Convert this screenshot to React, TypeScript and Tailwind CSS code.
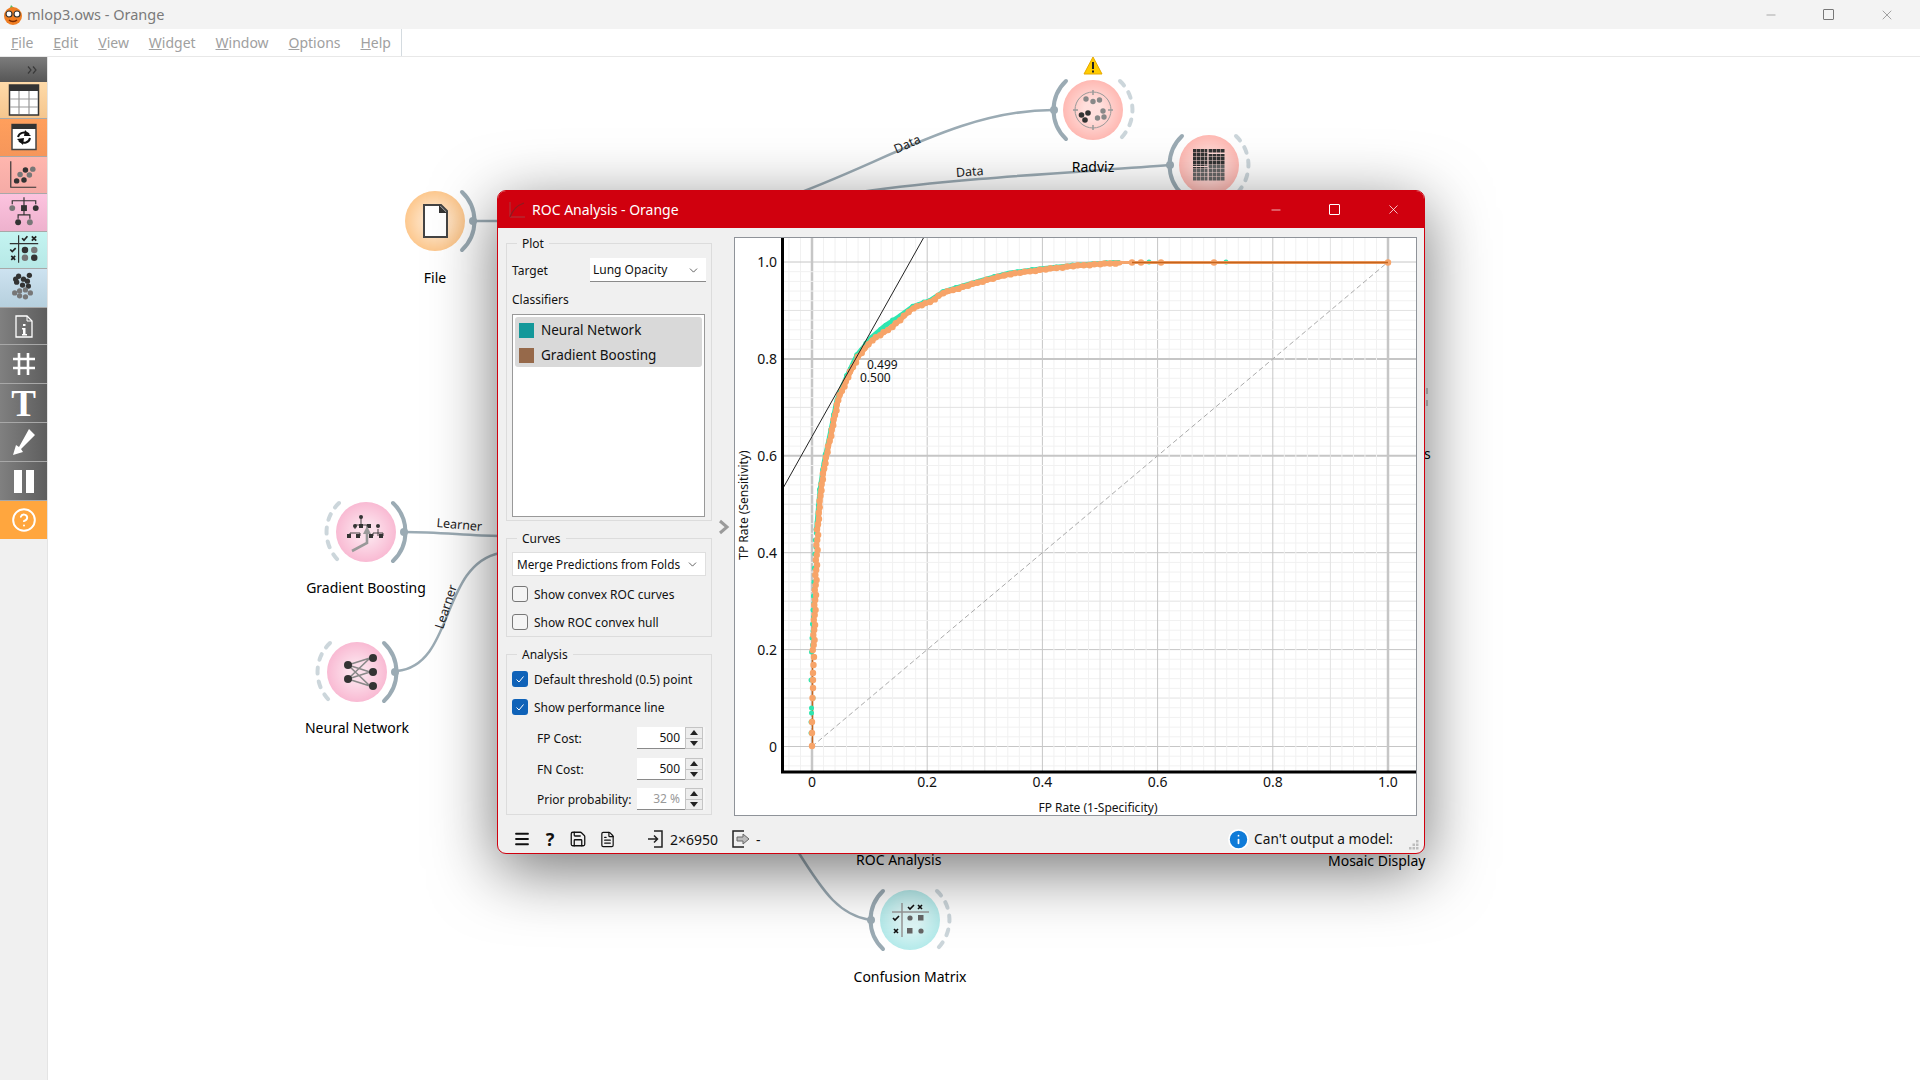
import { ChevronDown, Menu, Save, FileText, Info, CircleHelp, Minus, X } from "lucide-react";
import { ReactNode } from "react";

// plot scale, in screen coordinates
const px = (v: number) => 812 + 576 * v;
const py = (v: number) => 746.5 - 484.5 * v;

const orangeCurve = [[817.5, 530], [821, 490], [825, 463], [832, 430], [838, 400], [848, 377], [858, 357], [872, 340], [888, 330], [900, 320], [913, 308], [930, 302], [943, 293], [963, 287], [987, 280], [1010, 274], [1040, 270], [1073, 266], [1100, 264], [1120, 263]];
const tealCurve = [[816.5, 530], [820, 490], [824, 463], [831, 430], [837, 400], [847, 376], [857, 355], [871, 338], [886, 325], [900, 316], [913, 306.5], [930, 300.5], [943, 292], [963, 286], [987, 279], [1010, 273], [1040, 269], [1073, 265.5], [1100, 263.5], [1120, 262.5]];

// dots along a curve, slightly scattered like real threshold points
function sample(points: number[][], step: number) {
  const out: number[][] = [];
  for (let i = 0; i < points.length - 1; i++) {
    const [x1, y1] = points[i];
    const [x2, y2] = points[i + 1];
    const n = Math.ceil(Math.hypot(x2 - x1, y2 - y1) / step);
    for (let k = 0; k < n; k++) {
      const j = ((out.length * 7) % 5) - 2;
      out.push([x1 + ((x2 - x1) * k) / n + j * 0.25, y1 + ((y2 - y1) * k) / n + j * 0.2]);
    }
  }
  return out;
}

const lowerOrange = Array.from({ length: 24 }, (_, i) => [813.5 + i * 0.17 + ((i % 3) - 1) * 0.7, 650 - i * 5]);
const lowerTeal = Array.from({ length: 18 }, (_, i) => [811.5 + i * 0.24 + (i % 2) * 0.8, 652 - i * 7]);
const orangeDots = [
  ...lowerOrange, ...sample(orangeCurve, 6),
  [812, 746], [812, 733], [812, 722], [812.5, 698], [813, 688], [813, 680], [813, 673], [813.5, 665], [814, 657],
  [1132, 262.5], [1141, 262.5], [1161, 262.5], [1214, 262.5], [1388, 262.5],
];
const tealDots = [
  ...lowerTeal, ...sample(tealCurve, 9),
  [811, 733], [811, 722], [811.5, 713], [811.5, 708], [813, 698], [811, 680],
  [1149, 262], [1226, 262],
];
const fractions = Array.from({ length: 53 }, (_, i) => -0.04 + i * 0.02);
const toLine = (points: number[][]) => points.map((p) => p.join(",")).join(" ");

function Toolbox() {
  const row = "h-[37px] shrink-0 border-b border-[#a8a8a8] flex items-center justify-center";
  const gray = "bg-linear-to-r from-[#808080] to-[#5e5e5e]";
  return (
    <div className="w-12 shrink-0 bg-[#f0f0f0] border-r border-[#e4e4e4] flex flex-col">
      <div className="h-[25px] shrink-0 bg-linear-to-b from-[#7c7c7c] to-[#565656] flex items-center justify-end pr-[10px]">
        <svg width="10" height="8" viewBox="0 0 10 8" fill="none">
          <path d="M1 0.5L4 4L1 7.5M6 0.5L9 4L6 7.5" stroke="#3a3a3a" strokeWidth="1.2" />
        </svg>
      </div>
      <div className={`${row} h-[36px] bg-linear-to-b from-[#fedaa9] to-[#f5c68e]`}>
        <svg width="32" height="32" viewBox="0 0 32 32">
          <rect x="1.5" y="1" width="29" height="30" fill="#fff" stroke="#333" strokeWidth="1.5" />
          <rect x="1" y="1" width="30" height="6" fill="#333" />
          <path d="M11 7V30M21 7V30M2 15H30M2 23H30" stroke="#999" strokeWidth="1.2" />
        </svg>
      </div>
      <div className={`${row} h-[38px] bg-linear-to-b from-[#ff9f5c] to-[#f6965a]`}>
        <svg width="28" height="28" viewBox="0 0 28 28" className="mt-[-2px]">
          <rect x="2" y="1.5" width="24" height="25" fill="#fff" stroke="#444" strokeWidth="1.5" />
          <rect x="2" y="1" width="24" height="5" fill="#333" />
          <path d="M8 14C9 10 14 8 19 11M20 15C19 20 14 21 9 18" fill="none" stroke="#111" strokeWidth="2" />
          <path d="M15 7L21 13L14 13ZM13 22L7 16L14 15Z" fill="#111" />
        </svg>
      </div>
      <div className={`${row} bg-linear-to-b from-[#ffb6ae] to-[#f5aba6]`}>
        <svg width="48" height="36" viewBox="0 157 48 36">
          <path d="M11 161V187.5H37" fill="none" stroke="#333" strokeWidth="1.2" />
          <circle cx="17" cy="181" r="2.8" fill="#333" />
          <circle cx="24.5" cy="180" r="2.8" fill="#333" />
          <circle cx="26" cy="170" r="2.8" fill="#333" />
          <circle cx="20.5" cy="174.5" r="2.8" fill="#777" />
          <circle cx="30" cy="175" r="2.8" fill="#777" />
          <circle cx="33.5" cy="169" r="2.8" fill="#777" />
        </svg>
      </div>
      <div className={`${row} h-[38px] bg-linear-to-b from-[#fcc3df] to-[#eeb1cd]`}>
        <svg width="48" height="37" viewBox="0 194 48 37">
          <path d="M24.5 197V208M12.5 204V200.5H36.5V204M24.5 208V215M18.5 219V215H30.5V219" fill="none" stroke="#333" strokeWidth="1.2" />
          <circle cx="12.5" cy="208" r="3" fill="#777" />
          <rect x="21.5" y="205" width="6" height="6" fill="#333" />
          <circle cx="36.5" cy="208" r="3" fill="#333" />
          <circle cx="18.5" cy="222.5" r="3" fill="#333" />
          <circle cx="30.5" cy="222.5" r="3" fill="#777" />
        </svg>
      </div>
      <div className={`${row} bg-linear-to-b from-[#c4f4f1] to-[#b6e8e6]`}>
        <svg width="48" height="36" viewBox="0 232 48 36">
          <path d="M19 235V263M10 243.5H39" stroke="#333" strokeWidth="1.2" />
          <path d="M22.5 238L24.5 240L28 236M10.5 249.5L12.5 251.5L16 248" fill="none" stroke="#222" strokeWidth="1.7" />
          <path d="M32.5 236L37 240.5M37 236L32.5 240.5M11.5 256L15.5 260M15.5 256L11.5 260" stroke="#222" strokeWidth="1.7" />
          <circle cx="25.5" cy="250" r="3.3" fill="#333" />
          <circle cx="35" cy="250" r="3.3" fill="#777" />
          <circle cx="25.5" cy="258" r="3.3" fill="#777" />
          <circle cx="35" cy="258" r="3.3" fill="#333" />
        </svg>
      </div>
      <div className={`${row} h-[39px] bg-linear-to-b from-[#cde2f0] to-[#b6d0de]`}>
        <svg width="48" height="38" viewBox="0 269 48 38">
          {[[18, 276], [29, 275], [23, 279], [16, 282], [27, 281], [22, 285], [28, 286], [15, 279]].map(([x, y]) => (
            <circle key={`${x}-${y}`} cx={x + 1} cy={y} r="2.7" fill="#333" />
          ))}
          {[[15, 293], [20, 291], [26, 290], [31, 293], [20, 296], [26, 297]].map(([x, y]) => (
            <circle key={`${x}-${y}`} cx={x} cy={y} r="2.7" fill="#777" />
          ))}
        </svg>
      </div>
      <div className={`${row} ${gray} border-[#909090]`}>
        <svg width="20" height="25" viewBox="0 0 20 25">
          <path d="M2 2H13L18 7V23H2Z" fill="none" stroke="#fff" strokeWidth="1.3" />
          <path d="M13 2V7H18" fill="none" stroke="#fff" strokeWidth="1" />
          <path d="M9 10h2.5v2H9zM8 14h3.5v6h1.5v1.5H8V20h1v-4.5H8z" fill="#fff" />
        </svg>
      </div>
      <div className={`${row} h-[39px] ${gray} border-[#909090]`}>
        <svg width="24" height="24" viewBox="0 0 24 24">
          <path d="M7 1V23M16 1V23M1 7H23M1 16H23" stroke="#fff" strokeWidth="2.6" />
        </svg>
      </div>
      <div className={`${row} h-[39px] ${gray} border-[#909090] font-['Liberation_Serif',serif] font-bold text-white text-[37px] leading-none`}>
        T
      </div>
      <div className={`${row} h-[39px] ${gray} border-[#909090]`}>
        <svg width="28" height="30" viewBox="0 0 28 30">
          <path d="M19 2L25 8L11 22L13 25L3 28L6 18L9 20Z" fill="#fff" />
        </svg>
      </div>
      <div className={`${row} h-[39px] ${gray} border-[#909090] gap-[4px]`}>
        <span className="w-[8px] h-[23px] bg-white" />
        <span className="w-[8px] h-[23px] bg-white" />
      </div>
      <div className="h-[38px] shrink-0 bg-[#ffa63e] flex items-center justify-center text-white">
        <CircleHelp size={26} strokeWidth={1.8} />
      </div>
    </div>
  );
}

function NodeIcon({ kind }: { kind: string }) {
  if (kind === "file")
    return (
      <>
        <path d="M-11 -16H6L12 -10V16H-11Z" fill="#fff" stroke="#444" strokeWidth="2" />
        <path d="M4 -16L12 -8H4Z" fill="#333" />
      </>
    );
  if (kind === "radviz")
    return (
      <>
        <circle r="18" fill="none" stroke="#999" strokeWidth="1" />
        <path d="M0 -20V-15M0 15V20M-20 0H-15M15 0H20" stroke="#999" strokeWidth="1.5" />
        {[[-7, -11], [0, -8.5], [6.5, -10], [10, 1], [11, 7], [4.5, 8]].map(([x, y]) => (
          <circle key={`${x}${y}`} cx={x} cy={y} r="2.7" fill="#888" />
        ))}
        {[[-11.5, 5], [-5, 3], [-8, 10]].map(([x, y]) => (
          <circle key={`${x}${y}`} cx={x} cy={y} r="2.8" fill="#333" />
        ))}
      </>
    );
  if (kind === "mosaic")
    return (
      <>
        {Array.from({ length: 64 }, (_, i) => {
          const col = i % 8;
          const line = Math.floor(i / 8);
          const dark = line < 4 || (line === 4 && col < 3);
          return (
            <rect key={i} x={-16 + col * 4} y={-16 + line * 4} width="3.5" height="3.5" fill={dark ? "#333" : "#666"} />
          );
        })}
        <path d="M-1.2 -16V1M-1 -11.5H16M-16 1.5H-1M-1 1.5V16" stroke="#ffd8d5" strokeWidth="1" />
      </>
    );
  if (kind === "tree")
    return (
      <>
        <path d="M-5 -15V-8M-11 -3V-7H1V-3M-16 4V1H-6V4M12 -3V4M7 4V1H17V4" fill="none" stroke="#333" strokeWidth="0.9" />
        <circle cx="-5" cy="-15" r="2" fill="#333" />
        <circle cx="-11" cy="-6" r="2" fill="#333" />
        <rect x="-7" y="-8" width="4" height="4" fill="#333" />
        <rect x="1" y="-8" width="4" height="4" fill="#333" />
        <circle cx="12" cy="-6" r="2" fill="#333" />
        {[-17, -8, 5, 15].map((x) => (
          <rect key={x} x={x - 2} y="2" width="4" height="4" fill="#333" />
        ))}
        <path d="M-14 19L1 11V-1" fill="none" stroke="#999" strokeWidth="2.6" />
        <path d="M-3 2L1 -6L5 2Z" fill="#999" />
      </>
    );
  if (kind === "neural")
    return (
      <>
        <path d="M-9 -7L13 -14M-9 -7L13 0M-9 -7L13 14M-9 7L13 -14M-9 7L13 0M-9 7L13 14" stroke="#888" strokeWidth="1.6" />
        {[[-9, -7], [-9, 7], [16, -14], [16, 0], [16, 14]].map(([x, y]) => (
          <circle key={`${x}${y}`} cx={x} cy={y} r="4" fill="#333" />
        ))}
      </>
    );
  return (
    <>
      <path d="M-8 -17V17M-18 -8H19" stroke="#999" strokeWidth="1.5" />
      <path d="M-2 -13L0 -11L4 -15M-17 -2L-15 0L-11 -4" fill="none" stroke="#111" strokeWidth="1.6" />
      <path d="M8 -15L12 -11M12 -15L8 -11M-16 9L-12 13M-12 9L-16 13" stroke="#111" strokeWidth="1.6" />
      <circle cx="0" cy="-2" r="2.6" fill="#666" />
      <rect x="8" y="-5" width="5.5" height="5.5" fill="#666" />
      <rect x="-3" y="8" width="5.5" height="5.5" fill="#666" />
      <circle cx="11" cy="11" r="2.6" fill="#666" />
    </>
  );
}

function CanvasNode({ className, label, labelClass, kind, fill, solid, warning, source }: { className: string; label?: string; labelClass?: string; kind: string; fill: string; solid: "left" | "right"; warning?: boolean; source?: boolean }) {
  const leftArc = "M-27 -29A40 40 0 0 0 -27 29";
  const rightArc = "M27 -29A40 40 0 0 1 27 29";
  return (
    <div className={`absolute w-[160px] flex flex-col items-center ${className}`}>
      <svg width="100" height="100" viewBox="-50 -50 100 100" className="overflow-visible">
        <defs>
          <radialGradient id={`glow-${kind}`}>
            <stop offset="0.3" stopColor="#fff" stopOpacity="0.55" />
            <stop offset="1" stopColor="#fff" stopOpacity="0" />
          </radialGradient>
        </defs>
        <circle r="30" fill={fill} />
        <circle r="30" fill={`url(#glow-${kind})`} />
        <path d={solid === "left" ? leftArc : rightArc} fill="none" stroke="#9babb4" strokeWidth="4" strokeLinecap="round" />
        {!source && (
          <path d={solid === "left" ? rightArc : leftArc} fill="none" stroke="#ccd6db" strokeWidth="4" strokeLinecap="round" strokeDasharray="6 8" />
        )}
        <circle cx={solid === "left" ? -39 : 38} r="4" fill="#9babb4" />
        <NodeIcon kind={kind} />
        {warning && (
          <g transform="translate(0 -44)">
            <path d="M0 -9L9 8H-9Z" fill="#ffcc00" stroke="#e6a800" strokeWidth="1" strokeLinejoin="round" />
            <path d="M0 -4V3M0 4.5V6.5" stroke="#222" strokeWidth="2" />
          </g>
        )}
      </svg>
      {label && <span className={`text-[14px] leading-[18px] text-black whitespace-nowrap ${labelClass ?? "mt-[-2px]"}`}>{label}</span>}
    </div>
  );
}

function Links() {
  return (
    <svg className="absolute inset-0 w-[1872px] h-[1023px]" viewBox="48 57 1872 1023" fill="none">
      <g stroke="#9babb4" strokeWidth="2.5">
        <path d="M473 221H500" />
        <path d="M785 198C880 165 960 110 1053 110" />
        <path d="M860 192C960 178 1080 172 1170 165" />
        <path d="M405 532C440 532 470 536 500 536" />
        <path d="M397 671C455 665 440 565 500 553" />
        <path d="M797 850C825 895 840 915 870 920" />
      </g>
      <g fill="#222" fontSize="12.5">
        <text x="909" y="148" textAnchor="middle" transform="rotate(-24 909 148)">Data</text>
        <text x="970" y="176" textAnchor="middle" transform="rotate(-4 970 176)">Data</text>
        <text x="459" y="529" textAnchor="middle" transform="rotate(5 459 529)">Learner</text>
        <text x="450" y="608" textAnchor="middle" transform="rotate(-72 450 608)">Learner</text>
      </g>
    </svg>
  );
}

function Group({ title, className, children }: { title: string; className: string; children: ReactNode }) {
  return (
    <div className={`relative ml-[8px] w-[206px] border border-[#dcdcdc] px-[5px] flex flex-col ${className}`}>
      <span className="absolute top-[-9px] left-[10px] px-[5px] bg-[#f0f0f0] text-[12px] leading-[18px]">{title}</span>
      {children}
    </div>
  );
}

function Check({ label, checked, className }: { label: string; checked?: boolean; className?: string }) {
  return (
    <div className={`h-[16px] flex items-center gap-[6px] text-[12px] whitespace-nowrap ${className ?? ""}`}>
      {checked ? (
        <span className="w-[16px] h-[16px] rounded-[3px] bg-[#0f62b8] flex items-center justify-center">
          <svg width="10" height="10" viewBox="0 0 10 10">
            <path d="M1.5 5.5L4 8L8.5 2.5" fill="none" stroke="#fff" strokeWidth="1" />
          </svg>
        </span>
      ) : (
        <span className="w-[16px] h-[16px] rounded-[3px] border border-[#777] bg-[#f4f4f4]" />
      )}
      <span className="pt-[2px]">{label}</span>
    </div>
  );
}

function Spin({ label, value, muted, className }: { label: string; value: string; muted?: boolean; className: string }) {
  return (
    <div className={`flex items-center pl-[25px] text-[12px] ${className}`}>
      <span className="w-[100px] whitespace-nowrap pt-[1px]">{label}</span>
      <div className="w-[68px] h-full flex bg-[#f6f6f6]">
        <span className={`w-[48px] bg-white border-b border-[#8a8a8a] pr-[5px] pt-[1px] flex items-center justify-end ${muted ? "text-[#999]" : ""}`}>{value}</span>
        <div className="w-[18px] flex flex-col border border-[#c4c4c4] bg-[#ededed]">
          <span className="flex-1 flex items-center justify-center text-[#111] border-b border-[#c4c4c4]">
            <span className="w-0 h-0 border-x-[4px] border-x-transparent border-b-[5px] border-b-[#222]" />
          </span>
          <span className="flex-1 flex items-center justify-center">
            <span className="w-0 h-0 border-x-[4px] border-x-transparent border-t-[5px] border-t-[#222]" />
          </span>
        </div>
      </div>
    </div>
  );
}

function RocPlot() {
  return (
    <svg className="w-[683px] h-[579px] border border-[#8f9399] bg-white" viewBox="735 238 681 577" fill="none">
      <defs>
        <clipPath id="plot-area">
          <rect x="783" y="237" width="634" height="534" />
        </clipPath>
      </defs>
      <g clipPath="url(#plot-area)">
        {fractions.map((f, i) => {
          const k = i - 2;
          const color = k % 10 === 0 ? "#c6c6c6" : k % 5 === 0 ? "#e2e2e2" : "#f1f1f1";
          return (
            <g key={i} stroke={color}>
              <path d={`M${px(f)} 237V772`} strokeWidth={k === 0 || k === 50 ? 2.5 : 1} />
              <path d={`M783 ${py(f)}H1417`} strokeWidth={k === 30 || k === 40 ? 2 : 1} />
            </g>
          );
        })}
        <path d="M812 746.5L1388 262" stroke="#aaa" strokeDasharray="5 3" />
        <polyline points={toLine(tealCurve)} stroke="#2ee6b0" strokeWidth="5" strokeLinejoin="round" />
        <path d="M812.5 746V620L815 600" stroke="#c4641c" strokeWidth="1.5" />
        {tealDots.map(([x, y], i) => (
          <circle key={i} cx={x} cy={y} r="2.5" fill="#2ee6b0" />
        ))}
        <polyline points={toLine(orangeCurve)} stroke="#f7a469" strokeWidth="5" strokeLinejoin="round" strokeLinecap="round" />
        {orangeDots.map(([x, y], i) => (
          <circle key={i} cx={x} cy={y} r="3.2" fill="#f7a469" />
        ))}
        <path d="M1120 262.5H1388" stroke="#f5a56c" strokeWidth="3" />
        <path d="M1132 262.5H1388" stroke="#c4641c" strokeWidth="1.5" />
        <path d="M782 490L924 237" stroke="#222" strokeWidth="1" />
        <g fill="#111" fontSize="12">
          <text x="867" y="369">0.499</text>
          <text x="860" y="382">0.500</text>
        </g>
      </g>
      <path d="M782.5 237V772H1417" stroke="#000" strokeWidth="3" />
      <g fill="#111" fontSize="14">
        {[0, 0.2, 0.4, 0.6, 0.8, 1].map((v) => (
          <text key={v} x="777" y={py(v) + 5} textAnchor="end">
            {v === 0 ? "0" : v.toFixed(1)}
          </text>
        ))}
        {[0, 0.2, 0.4, 0.6, 0.8, 1].map((v) => (
          <text key={v} x={px(v)} y="787" textAnchor="middle">
            {v === 0 ? "0" : v.toFixed(1)}
          </text>
        ))}
      </g>
      <g fill="#111" fontSize="12">
        <text x="1098" y="812" textAnchor="middle">FP Rate (1-Specificity)</text>
        <text x="748" y="505" textAnchor="middle" transform="rotate(-90 748 505)">TP Rate (Sensitivity)</text>
      </g>
    </svg>
  );
}

function RocWindow() {
  return (
    <div className="absolute left-[449px] top-[133px] w-[928px] h-[664px] flex flex-col bg-[#f0f0f0] border border-[#d0000e] rounded-t-[9px] rounded-b-[9px] shadow-[0_16px_65px_rgba(0,0,0,0.55)] text-[#111]">
      <div className="h-[37px] shrink-0 bg-[#d0000e] rounded-t-[8px] flex items-center pl-[11px] text-white text-[14px]">
        <svg width="16" height="16" viewBox="0 0 16 16" className="mr-[7px]" fill="none">
          <path d="M1 0V15H16" stroke="#a83a40" strokeWidth="1" />
          <path d="M1 15C4 7 9 3 15 1" stroke="#8c1a20" strokeWidth="1.2" />
        </svg>
        ROC Analysis - Orange
        <div className="ml-auto flex items-center gap-[46px] pr-[23px]">
          <Minus size={14} strokeWidth={1.2} />
          <span className="w-[11px] h-[11px] border border-white rounded-[1px]" />
          <X size={15} strokeWidth={1.2} />
        </div>
      </div>
      <div className="flex-1 flex min-h-0">
        <div className="relative w-[236px] shrink-0 pt-[15px] flex flex-col gap-[17px]">
          <Group title="Plot" className="h-[278px]">
            <div className="mt-[14px] h-[24px] flex items-center justify-between text-[12px]">
              <span className="pt-[1px]">Target</span>
              <div className="w-[116px] h-full bg-white border-b border-[#8a8a8a] flex items-center justify-between pl-[3px] pr-[6px] pt-[1px]">
                Lung Opacity
                <ChevronDown size={13} strokeWidth={1.2} />
              </div>
            </div>
            <div className="mt-[9px] text-[12px] leading-[18px]">Classifiers</div>
            <div className="mt-[5px] h-[203px] w-[193px] bg-white border border-[#999] p-[2px] text-[13.5px]">
              <div className="h-[25px] bg-[#d9d9d9] rounded-t-[3px] flex items-center gap-[7px] pl-[4px] pt-[1px]">
                <span className="w-[15px] h-[15px] bg-[#14989a]" />
                Neural Network
              </div>
              <div className="h-[25px] bg-[#d9d9d9] rounded-b-[3px] flex items-center gap-[7px] pl-[4px] pt-[1px]">
                <span className="w-[15px] h-[15px] bg-[#96694a]" />
                Gradient Boosting
              </div>
            </div>
          </Group>
          <Group title="Curves" className="h-[99px]">
            <div className="mt-[13px] h-[24px] w-[194px] bg-white border border-[#dfdfdf] flex items-center justify-between pl-[4px] pr-[6px] pt-[1px] text-[11.8px] whitespace-nowrap">
              Merge Predictions from Folds
              <ChevronDown size={13} strokeWidth={1.2} />
            </div>
            <Check label="Show convex ROC curves" className="mt-[10px]" />
            <Check label="Show ROC convex hull" className="mt-[12px]" />
          </Group>
          <Group title="Analysis" className="h-[161px]">
            <Check label="Default threshold (0.5) point" checked className="mt-[16px]" />
            <Check label="Show performance line" checked className="mt-[12px]" />
            <Spin label="FP Cost:" value="500" className="mt-[12px] h-[22px]" />
            <Spin label="FN Cost:" value="500" className="mt-[9px] h-[22px]" />
            <Spin label="Prior probability:" value="32 %" muted className="mt-[8px] h-[22px]" />
          </Group>
          <svg className="absolute left-[219px] top-[291px]" width="14" height="16" viewBox="0 0 14 16" fill="none">
            <path d="M3 2L10 8L3 14" stroke="#9a9a9a" strokeWidth="3" />
          </svg>
        </div>
        <div className="pt-[9px]">
          <RocPlot />
        </div>
      </div>
      <div className="h-[37px] shrink-0 flex items-center pl-[15px] pt-[9px] text-[14px] relative">
        <Menu size={18} strokeWidth={2.4} />
        <span className="ml-[12px] w-[14px] text-center font-bold text-[18px] leading-none">?</span>
        <Save size={18} strokeWidth={1.7} className="ml-[12px]" />
        <FileText size={17} strokeWidth={1.7} className="ml-[12px]" />
        <svg width="17" height="18" viewBox="0 0 17 18" fill="none" className="ml-[31px]">
          <path d="M7 1H15V17H7M1 9H10M7 5.5L10.5 9L7 12.5" stroke="#222" strokeWidth="1.5" />
        </svg>
        <span className="ml-[6px]">2×6950</span>
        <svg width="18" height="18" viewBox="0 0 18 18" fill="none" className="ml-[14px]">
          <path d="M12 1H1V17H12" stroke="#222" strokeWidth="1.5" />
          <path d="M5 7H11V4L17 9L11 14V11H5Z" fill="#bbb" stroke="#666" strokeWidth="1" />
        </svg>
        <span className="ml-[6px]">-</span>
        <Info size={23} className="ml-auto mr-[4px] fill-[#0f7bd8] text-white" strokeWidth={1.8} />
        <span className="mr-[31px] whitespace-nowrap text-[13.7px]">Can't output a model:</span>
        <svg width="10" height="10" viewBox="0 0 10 10" fill="#bdbdbd" className="absolute right-[5px] bottom-[3px]">
          <rect x="7" y="0" width="2.5" height="2.5" />
          <rect x="3.5" y="3.5" width="2.5" height="2.5" />
          <rect x="7" y="3.5" width="2.5" height="2.5" />
          <rect x="0" y="7" width="2.5" height="2.5" />
          <rect x="3.5" y="7" width="2.5" height="2.5" />
          <rect x="7" y="7" width="2.5" height="2.5" />
        </svg>
      </div>
    </div>
  );
}

export default function App() {
  const menus = ["File", "Edit", "View", "Widget", "Window", "Options", "Help"];
  return (
    <div className="w-[1920px] h-[1080px] overflow-hidden flex flex-col bg-white font-['Noto_Sans',sans-serif]">
      <div className="h-[29px] shrink-0 bg-[#f3f3f3] flex items-center pl-[2px] text-[14.5px] text-[#7a7a7a]">
        <svg width="22" height="22" viewBox="0 0 22 22" className="mr-[3px]">
          <path d="M9 1L12 4H8Z" fill="#5cb85c" />
          <circle cx="11" cy="12" r="9" fill="#ef7d22" />
          <circle cx="7" cy="10" r="3" fill="#fff" stroke="#333" strokeWidth="1.2" />
          <circle cx="15" cy="10" r="3" fill="#fff" stroke="#333" strokeWidth="1.2" />
          <path d="M7 16C9 18 13 18 15 16" stroke="#7a2b00" strokeWidth="1.5" fill="none" />
        </svg>
        mlop3.ows - Orange
        <div className="ml-auto flex items-center gap-[45px] pr-[25px] text-[#777]">
          <Minus size={14} strokeWidth={1} />
          <span className="w-[11px] h-[11px] border border-[#777] rounded-[1px]" />
          <X size={16} strokeWidth={1} />
        </div>
      </div>
      <div className="h-[28px] shrink-0 border-b border-[#e8e8e8] flex items-center text-[14px] text-[#a0a0a0] pl-[11px]">
        <div className="w-[391px] h-full flex items-center justify-between border-r border-[#d4dbe0] pr-[10px]">
          {menus.map((m) => (
            <span key={m}>
              <span className="underline">{m[0]}</span>
              {m.slice(1)}
            </span>
          ))}
        </div>
      </div>
      <div className="flex-1 flex min-h-0">
        <Toolbox />
        <div className="relative flex-1">
          <Links />
          <CanvasNode className="left-[307px] top-[114px]" label="File" kind="file" fill="#fdc88e" solid="right" source />
          <CanvasNode className="left-[965px] top-[3px]" label="Radviz" kind="radviz" fill="#ffb9b3" solid="left" warning />
          <CanvasNode className="left-[1081px] top-[58px]" kind="mosaic" fill="#ffb9b3" solid="left" />
          <CanvasNode className="left-[238px] top-[425px]" label="Gradient Boosting" labelClass="mt-[-3px]" kind="tree" fill="#f9bad3" solid="right" />
          <CanvasNode className="left-[229px] top-[565px]" label="Neural Network" labelClass="mt-[-3px]" kind="neural" fill="#f9bad3" solid="right" />
          <CanvasNode className="left-[782px] top-[813px]" label="Confusion Matrix" kind="matrix" fill="#b5ebeb" solid="left" />
          <span className="absolute left-[808px] top-[794px] text-[14px] leading-[18px] whitespace-nowrap">ROC Analysis</span>
          <span className="absolute left-[1280px] top-[795px] text-[14px] leading-[18px] whitespace-nowrap">Mosaic Display</span>
          <span className="absolute left-[1376px] top-[388px] text-[14px] leading-[18px]">s</span>
          <span className="absolute left-[1378px] top-[331px] w-[2px] h-[6px] bg-[#c8c8c8]" />
          <span className="absolute left-[1378px] top-[343px] w-[2px] h-[6px] bg-[#c8c8c8]" />
          <RocWindow />
        </div>
      </div>
    </div>
  );
}
